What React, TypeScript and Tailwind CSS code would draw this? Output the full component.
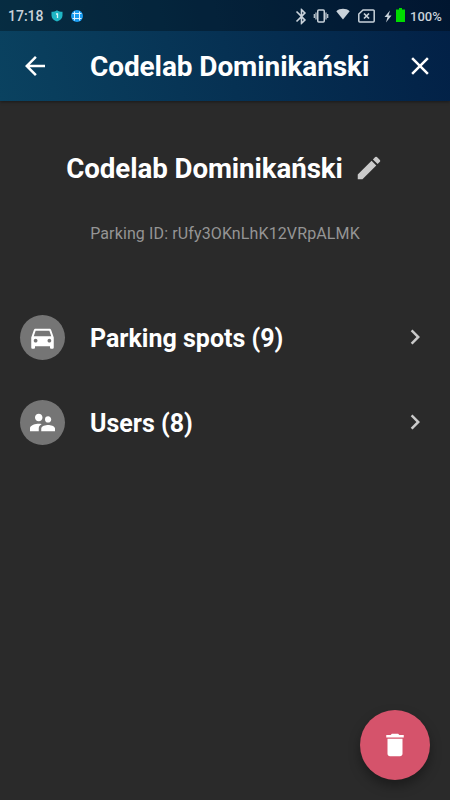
import {
  MdArrowBack,
  MdBluetooth,
  MdChevronRight,
  MdClose,
  MdDelete,
  MdDirectionsCar,
  MdEdit,
  MdSupervisorAccount,
} from "react-icons/md";
import type { IconType } from "react-icons";

const parking = {
  id: "rUfy3OKnLhK12VRpALMK",
  name: "Codelab Dominikański",
  spots: 9,
  users: 8,
};

function StatusBar() {
  return (
    <div className="flex h-[31px] items-center bg-black/30 pl-2 pr-2 pt-px text-[#c9d2da]">
      <span className="w-[36px] text-[14px] font-medium leading-none">17:18</span>

      <svg className="ml-[7px] h-3 w-3" viewBox="0 0 12 12">
        <path d="M6 0.3C4.500 1.300 2.500 1.800 0.500 1.800v3.700c0 3 2.300 5 5.500 6 3.200-1 5.500-3 5.500-6V1.800C9.500 1.800 7.500 1.300 6 0.300z" fill="#1fb5c4" />
        <path d="M5 4h1.500v4" fill="none" stroke="#d9f5f7" strokeWidth="1.300" />
      </svg>
      <svg className="ml-2 h-3 w-3" viewBox="0 0 12 12">
        <circle cx="6" cy="6" r="6" fill="#1a9cf0" />
        <path d="M3.500 1.500v9M8.500 1.500v9M1.500 3.500h9M1.500 8.500h9" stroke="#dff1ff" />
      </svg>

      <div className="flex-1" />

      <MdBluetooth className="h-[19px] w-[19px]" />
      <svg className="ml-[2px] h-4 w-4" viewBox="0 0 16 16" fill="none" stroke="currentColor">
        <rect x="4.750" y="2" width="6.500" height="12" rx="1" strokeWidth="1.500" />
        <path d="M3 4.500v7M13 4.500v7M1.300 6v4M14.700 6v4" strokeWidth="1.200" />
      </svg>
      <svg className="mb-[5px] ml-[7px] h-3 w-[14px]" viewBox="0 0 14 12" fill="currentColor">
        <path d="M7 11.500 0.300 3.200C2.200 1.600 4.500 0.800 7 0.800s4.800 0.800 6.700 2.400z" />
      </svg>
      <svg className="ml-[8px] h-[14px] w-[17px]" viewBox="0 0 17 14" fill="none" stroke="currentColor" strokeWidth="1.500">
        <path d="M5 1h10.200a1 1 0 0 1 1 1v10a1 1 0 0 1-1 1H1.800a1 1 0 0 1-1-1V5z" />
        <path d="m6 4.500 5 5M11 4.500l-5 5" strokeWidth="1.700" />
      </svg>
      <svg className="ml-[9px] h-[13px] w-2" viewBox="0 0 8 13" fill="currentColor">
        <path d="M6 0.500 0.500 7h3L2 12.500 7.500 5.500h-3z" />
      </svg>
      <svg className="mb-0.5 ml-[4px] h-[14px] w-[9px]" viewBox="0 0 9 14" fill="#00dc00">
        <path d="M3 0h3v1.500h3V14H0V1.500h3z" />
      </svg>
      <span className="ml-[5px] w-8 whitespace-nowrap text-[13px] font-medium leading-none">100%</span>
    </div>
  );
}

function Header({ title }: { title: string }) {
  return (
    <header className="relative bg-linear-[75deg] from-[#0a4260] to-[#022046] shadow-[0_1px_3px_rgba(0,0,0,0.4)]">
      <StatusBar />
      <div className="flex h-[70px] items-center px-5">
        <button aria-label="Back">
          <MdArrowBack className="h-[30px] w-[30px]" />
        </button>
        <h1 className="ml-10 flex-1 whitespace-nowrap pt-0.5 text-[28px] font-bold leading-none tracking-[-0.1px]">
          {title}
        </h1>
        <button aria-label="Close" className="-mr-[5px]">
          <MdClose className="h-[30px] w-[30px]" />
        </button>
      </div>
    </header>
  );
}

function MenuRow({ icon: Icon, label }: { icon: IconType; label: string }) {
  return (
    <button className="flex h-[85px] w-full items-center px-5 text-left">
      <span className="flex h-[45px] w-[45px] items-center justify-center rounded-full bg-[#757575]">
        {/* odd-sized box keeps the 30px glyph centred on the half pixel */}
        <Icon className="h-[45px] w-[45px]" viewBox="-6 -6 36 36" />
      </span>
      <span className="ml-[25px] flex-1 pt-0.5 text-[25px] font-bold leading-none">{label}</span>
      <MdChevronRight className="mb-px h-[30px] w-[30px] text-[#cacaca]" />
    </button>
  );
}

export default function App() {
  return (
    <div className="relative h-[800px] w-[450px] overflow-hidden bg-[#2a2a2a] font-[Roboto,sans-serif] text-white">
      <Header title={parking.name} />

      <main>
        <div className="flex h-[134px] items-center justify-center gap-[11px]">
          <h2 className="whitespace-nowrap pt-0.5 text-[27.700px] font-bold leading-none tracking-[-0.08px]">
            {parking.name}
          </h2>
          <MdEdit className="h-[30px] w-[30px] text-[#cacaca]" />
        </div>
        <p className="-mt-[9px] text-center text-[16px] leading-4 tracking-[0.12px] text-[#959595]">
          Parking ID: {parking.id}
        </p>

        <nav className="mt-[53px]">
          <MenuRow icon={MdDirectionsCar} label={`Parking spots (${parking.spots})`} />
          <MenuRow icon={MdSupervisorAccount} label={`Users (${parking.users})`} />
        </nav>
      </main>

      <button
        aria-label="Delete"
        className="absolute bottom-5 right-5 flex h-[70px] w-[70px] items-center justify-center rounded-full bg-[#d5536b] shadow-[0_6px_12px_rgba(0,0,0,0.35)]"
      >
        <MdDelete className="h-[30px] w-[30px]" />
      </button>
    </div>
  );
}
